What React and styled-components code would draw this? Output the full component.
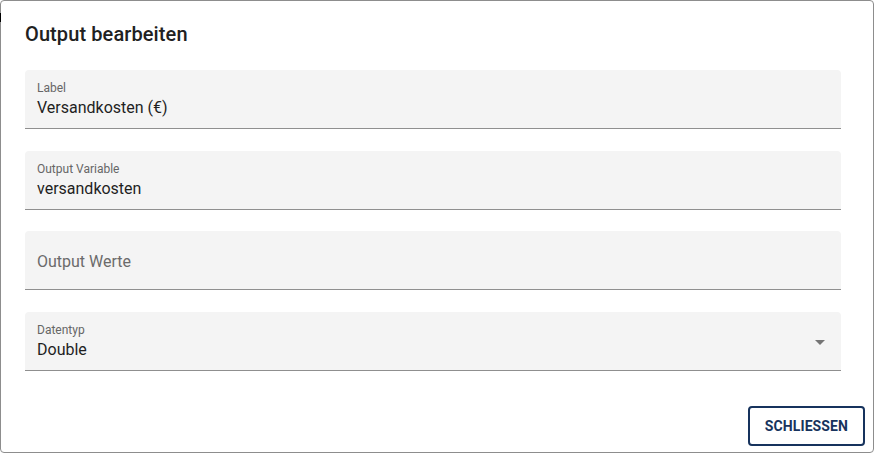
import React from "react";
import styled, { createGlobalStyle } from "styled-components";

const Global = createGlobalStyle`
  html, body { margin: 0; padding: 0; background: #fff; }
  body { font-family: Roboto, "Noto Sans", "Liberation Sans", sans-serif; }
  * { box-sizing: border-box; }
`;

const Dialog = styled.div`
  position: relative;
  width: 874px;
  height: 453px;
  border: 1px solid #8d8d8d;
  border-radius: 4px;
  background: #fff;
  display: flex;
  flex-direction: column;
  &::before {
    content: "";
    position: absolute;
    left: -1px;
    top: 12px;
    width: 1px;
    height: 9px;
    background: #000;
  }
`;

const Title = styled.h2`
  margin: 17px 24px 0;
  font-size: 20px;
  line-height: 32px;
  font-weight: 500;
  color: #212121;
  letter-spacing: 0.1px;
`;

const Content = styled.div`
  display: flex;
  flex-direction: column;
  gap: 21.67px;
  padding: 20px 32px 0 24px;
`;

const Field = styled.div`
  position: relative;
  height: 59px;
  background: #f4f4f4;
  border-bottom: 1px solid #8f8f8f;
  border-radius: 4px 4px 0 0;
  padding: ${(p) => (p.$empty ? "19px 12px 0" : "11px 12px 0")};
`;

const FieldLabel = styled.div`
  font-size: 12px;
  line-height: 15px;
  color: #666;
`;

const Value = styled.div`
  font-size: 16px;
  line-height: 24px;
  color: ${(p) => (p.$placeholder ? "#6b6b6b" : "#1f1f1f")};
`;

const Arrow = styled.span`
  position: absolute;
  right: 16px;
  top: 28px;
  width: 0;
  height: 0;
  border-left: 5px solid transparent;
  border-right: 5px solid transparent;
  border-top: 5px solid #757575;
`;

const Actions = styled.div`
  margin-top: auto;
  display: flex;
  justify-content: flex-end;
  padding: 0 8px 6px;
`;

const Button = styled.button`
  height: 40px;
  padding: 0 15px;
  border: 2px solid #17335d;
  border-radius: 4px;
  background: #fff;
  color: #17335d;
  font-family: Roboto, "Liberation Sans", sans-serif;
  font-size: 14px;
  font-weight: 700;
  letter-spacing: 0.1px;
  text-transform: uppercase;
  cursor: pointer;
`;

export default function App() {
  return (
    <>
      <Global />
      <Dialog>
        <Title>Output bearbeiten</Title>
        <Content>
          <Field>
            <FieldLabel>Label</FieldLabel>
            <Value>Versandkosten (€)</Value>
          </Field>
          <Field>
            <FieldLabel>Output Variable</FieldLabel>
            <Value>versandkosten</Value>
          </Field>
          <Field $empty>
            <Value $placeholder>Output Werte</Value>
          </Field>
          <Field>
            <FieldLabel>Datentyp</FieldLabel>
            <Value>Double</Value>
            <Arrow />
          </Field>
        </Content>
        <Actions>
          <Button>Schliessen</Button>
        </Actions>
      </Dialog>
    </>
  );
}
